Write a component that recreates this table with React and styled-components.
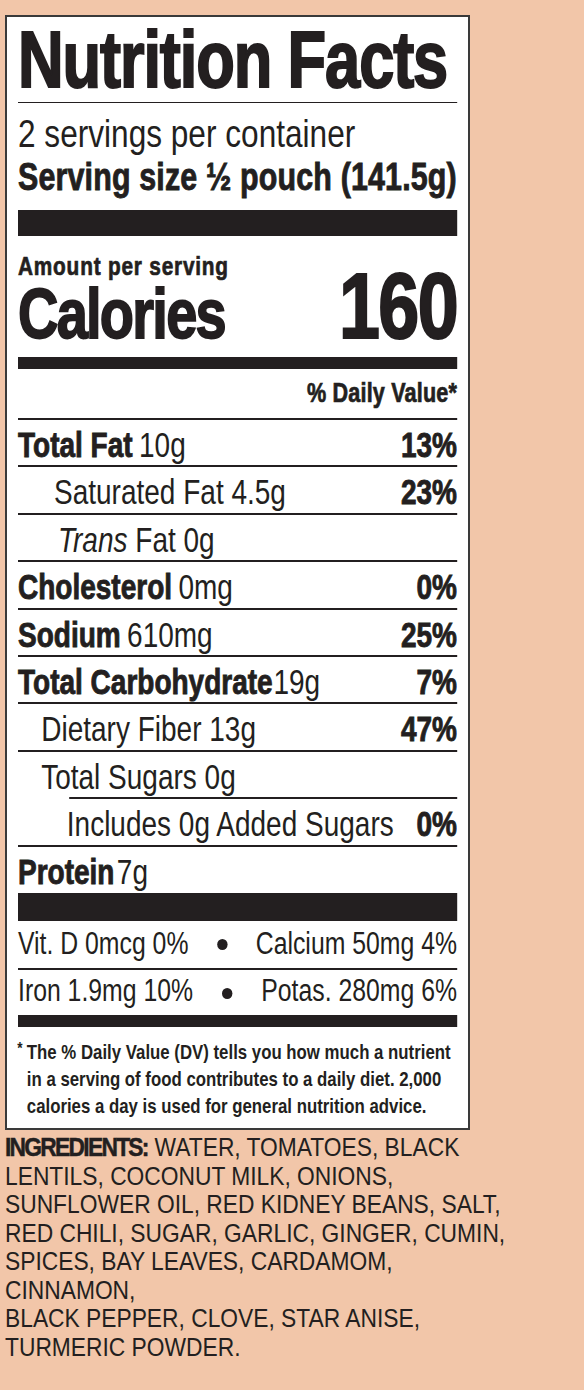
import React from "react";
import styled, { createGlobalStyle } from "styled-components";

// no condensed face is installed, so the label text is squeezed horizontally
const SQUEEZE = 0.8;

const GlobalStyle = createGlobalStyle`
  body {
    margin: 0;
    background: #f2c6a9;
    color: #231f20;
    font-family: "Liberation Sans", Arial, sans-serif;
  }
`;

const Page = styled.div`
  width: 584px;
  min-height: 1390px;
  box-sizing: border-box;
  padding: 15px 0 0 5px;
  overflow: hidden;
`;

const Label = styled.div`
  width: 465px;
  box-sizing: border-box;
  background: #fff;
  border: 2px solid #3a3a3a;
  padding: 3px 11px 9px 11px;
`;

const Condensed = styled.div`
  width: ${p => 100 / p.$scale}%;
  transform: scaleX(${p => p.$scale});
  transform-origin: left top;
`;

const Title = styled.h1`
  margin: 0;
  font-size: 79px;
  font-weight: 700;
  line-height: 80px;
  letter-spacing: -1.4px;
  white-space: nowrap;
  -webkit-text-stroke: 2px #231f20;
`;

const Rule = styled.div`
  height: ${p => p.$h || 1}px;
  margin-top: ${p => p.$mt || 0}px;
  background: #231f20;
`;

const Servings = styled.div`
  margin-top: 8px;
  font-size: 39.5px;
  line-height: 44px;
  white-space: nowrap;
`;

const ServingSize = styled.div`
  font-size: 38px;
  font-weight: 700;
  line-height: 44px;
  letter-spacing: 0.2px;
  white-space: nowrap;
  -webkit-text-stroke: 0.9px #231f20;
`;

const CalorieBlock = styled.div`
  margin-top: 16px;
  display: flex;
  justify-content: space-between;
  align-items: flex-end;
`;

const Amount = styled.div`
  font-size: 26px;
  font-weight: 700;
  line-height: 28px;
  letter-spacing: 1px;
  -webkit-text-stroke: 0.7px #231f20;
`;

const Calories = styled.div`
  margin-top: 4px;
  font-size: 70px;
  font-weight: 700;
  line-height: 60px;
  letter-spacing: -2.2px;
  -webkit-text-stroke: 1.8px #231f20;
`;

const CalorieNum = styled.div`
  font-size: 92px;
  font-weight: 700;
  line-height: 76px;
  letter-spacing: -2px;
  -webkit-text-stroke: 2.2px #231f20;
`;

const DVHead = styled.div`
  margin: 9px 0 10px;
  font-size: 27px;
  font-weight: 700;
  line-height: 30px;
  letter-spacing: 0.2px;
  text-align: right;
  -webkit-text-stroke: 0.7px #231f20;
`;

const Row = styled.div`
  height: 47.4px;
  box-sizing: border-box;
  border-top: 2px solid #231f20;
  margin-left: ${p => p.$line || 0}px;
  padding-top: 4px;
  display: flex;
  justify-content: space-between;
  align-items: baseline;
  font-size: 35px;
  line-height: 42px;
  white-space: nowrap;
`;

const Lead = styled.span`
  margin-left: ${p => p.$indent || 0}px;
`;

const Name = styled.span`
  font-weight: 700;
  -webkit-text-stroke: 0.9px #231f20;
`;

const Amt = styled.span`
  margin-left: ${p => p.$gap ?? 8}px;
`;

const Pct = styled.span`
  font-weight: 700;
  -webkit-text-stroke: 0.9px #231f20;
`;

const VitRow = styled.div`
  height: 47px;
  box-sizing: border-box;
  border-top: ${p => (p.$first ? "none" : "2px solid #231f20")};
  padding-top: ${p => (p.$first ? 3 : 1)}px;
  display: flex;
  justify-content: space-between;
  align-items: baseline;
  font-size: 31px;
  line-height: 40px;
  white-space: nowrap;
`;

const Dot = styled.span`
  align-self: center;
  flex: none;
  width: 13px;
  height: 11px;
  margin-top: ${p => (p.$first ? -4 : 0)}px;
  border-radius: 50%;
  background: #231f20;
`;

const Footnote = styled.div`
  margin-top: 11px;
  display: flex;
  font-size: 21px;
  font-weight: 700;
  line-height: 27px;
  white-space: nowrap;
`;

const Star = styled.span`
  width: 12px;
  flex: none;
  margin-left: -1px;
  font-size: 17px;
  line-height: 22px;
`;

const Ingredients = styled.p`
  margin: 3px 0 0 0;
  font-size: 26.5px;
  line-height: 28.5px;
  white-space: nowrap;
  transform: scaleX(0.86);
  transform-origin: left top;
`;

const IngredientsHead = styled.span`
  font-weight: 700;
  letter-spacing: -2px;
  -webkit-text-stroke: 0.5px #231f20;
  margin-right: 8px;
`;

const nutrients = [
  { name: "Total Fat", amt: "10g", pct: "13%" },
  { label: "Saturated Fat 4.5g", pct: "23%", indent: 45 },
  { trans: true, indent: 50 },
  { name: "Cholesterol", amt: "0mg", pct: "0%" },
  { name: "Sodium", amt: "610mg", pct: "25%" },
  { name: "Total Carbohydrate", amt: "19g", pct: "7%", gap: 1 },
  { label: "Dietary Fiber 13g", pct: "47%", indent: 29 },
  { label: "Total Sugars 0g", indent: 29 },
  { label: "Includes 0g Added Sugars", pct: "0%", line: 64, indent: -3 },
  { name: "Protein", amt: "7g", gap: 3 },
];

function NutrientRow({ n }) {
  let content;
  if (n.trans) {
    content = (
      <>
        <i>Trans</i> Fat 0g
      </>
    );
  } else if (n.name) {
    content = (
      <>
        <Name>{n.name}</Name>
        <Amt $gap={n.gap}>{n.amt}</Amt>
      </>
    );
  } else {
    content = n.label;
  }
  return (
    <Row $line={n.line}>
      <Lead $indent={n.indent}>{content}</Lead>
      {n.pct && <Pct>{n.pct}</Pct>}
    </Row>
  );
}

export default function App() {
  return (
    <Page>
      <GlobalStyle />
      <Label>
        <Condensed $scale={SQUEEZE}>
          <Title>Nutrition Facts</Title>
          <Rule $mt={2} />
          <Servings>2 servings per container</Servings>
          <ServingSize>Serving size ½ pouch (141.5g)</ServingSize>
          <Rule $mt={11} $h={26} />
          <CalorieBlock>
            <div>
              <Amount>Amount per serving</Amount>
              <Calories>Calories</Calories>
            </div>
            <CalorieNum>160</CalorieNum>
          </CalorieBlock>
          <Rule $mt={13} $h={12} />
          <DVHead>% Daily Value*</DVHead>
          {nutrients.map((n, i) => (
            <NutrientRow key={i} n={n} />
          ))}
          <Rule $mt={1.5} $h={28} />
          <VitRow $first>
            <span>Vit. D 0mcg 0%</span>
            <Dot $first />
            <span>Calcium 50mg 4%</span>
          </VitRow>
          <VitRow>
            <span>Iron 1.9mg 10%</span>
            <Dot />
            <span>Potas. 280mg 6%</span>
          </VitRow>
          <Rule $h={12} />
          <Footnote>
            <Star>*</Star>
            <div>
              The % Daily Value (DV) tells you how much a nutrient
              <br />
              in a serving of food contributes to a daily diet. 2,000
              <br />
              calories a day is used for general nutrition advice.
            </div>
          </Footnote>
        </Condensed>
      </Label>
      <Ingredients>
        <IngredientsHead>INGREDIENTS:</IngredientsHead>WATER, TOMATOES, BLACK
        <br />
        LENTILS, COCONUT MILK, ONIONS,
        <br />
        SUNFLOWER OIL, RED KIDNEY BEANS, SALT,
        <br />
        RED CHILI, SUGAR, GARLIC, GINGER, CUMIN,
        <br />
        SPICES, BAY LEAVES, CARDAMOM,
        <br />
        CINNAMON,
        <br />
        BLACK PEPPER, CLOVE, STAR ANISE,
        <br />
        TURMERIC POWDER.
      </Ingredients>
    </Page>
  );
}
